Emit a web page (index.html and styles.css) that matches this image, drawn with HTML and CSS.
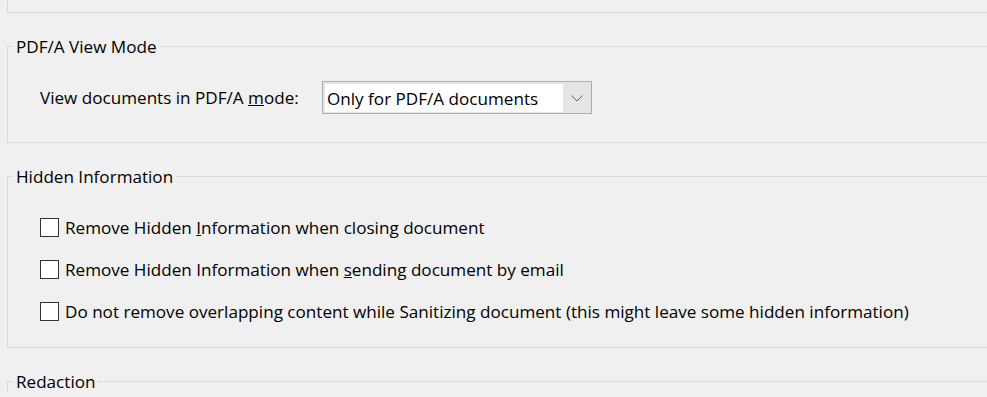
FILE: index.html
```html
<!DOCTYPE html>
<html lang="en">
<head>
    <meta charset="UTF-8" />
    <meta name="viewport" content="width=device-width, initial-scale=1.0" />
    <title>Preferences - Documents</title>
    <link rel="stylesheet" href="styles.css">
</head>
<body>
    <div class="panel">
        <!-- previous group, scrolled off the top -->
        <div class="group-tail"></div>

        <fieldset class="group">
            <legend>PDF/A View Mode</legend>
            <div class="group-body pdfa">
                <div class="field-row">
                    <label class="field-label">View documents in PDF/A <u>m</u>ode:</label>
                    <div class="combo">
                        <span class="combo-value">Only for PDF/A documents</span>
                        <span class="combo-arrow">
                            <svg width="12" height="7" viewBox="0 0 12 7">
                                <path d="M0.5 0.5 L6 6 L11.5 0.5" fill="none" stroke="#606060" stroke-width="1"/>
                            </svg>
                        </span>
                    </div>
                </div>
            </div>
        </fieldset>

        <fieldset class="group">
            <legend>Hidden Information</legend>
            <div class="group-body hidden-info">
                <label class="check-row">
                    <span class="checkbox"></span>
                    <span>Remove Hidden <u>I</u>nformation when closing document</span>
                </label>
                <label class="check-row">
                    <span class="checkbox"></span>
                    <span>Remove Hidden Information when <u>s</u>ending document by email</span>
                </label>
                <label class="check-row">
                    <span class="checkbox"></span>
                    <span>Do not remove overlapping content while Sanitizing document (this might leave some hidden information)</span>
                </label>
            </div>
        </fieldset>

        <!-- next group, cut off by the bottom -->
        <fieldset class="group group-open">
            <legend>Redaction</legend>
        </fieldset>
    </div>
</body>
</html>
```

FILE: styles.css
```css
:root {
    --bg-color: #f0f0f0;
    --line-color: #dadada;
    --text-color: #000000;
}

body {
    margin: 0;
    padding: 0;
    background-color: var(--bg-color);
    color: var(--text-color);
    font-family: 'Open Sans', 'Noto Sans', sans-serif;
    font-size: 17.1px;
}

.panel {
    padding-left: 7px;
}

.group-tail {
    height: 13px;
    box-sizing: border-box;
    border-left: 1px solid var(--line-color);
    border-bottom: 1px solid var(--line-color);
}

.group {
    margin: 23px 0 0 0;
    padding: 0;
    border: 1px solid var(--line-color);
    border-right: none;
    min-width: 0;
}

.group legend {
    margin-left: 5px;
    padding: 0 3px;
    line-height: 21px;
}

.group-open {
    border-bottom: none;
}

.group-body {
    padding-left: 32px;
}

.pdfa {
    padding-top: 24px;
    padding-bottom: 28px;
}

.field-row {
    display: flex;
    align-items: center;
}

.field-label {
    width: 282px;
    flex-shrink: 0;
}

.combo {
    display: flex;
    width: 270px;
    height: 33px;
    box-sizing: border-box;
    border: 1px solid #adadad;
    background-color: #e5e5e5;
    padding: 2px 0 1px 2px;
}

.combo-value {
    flex: 1;
    background-color: #ffffff;
    display: flex;
    align-items: center;
    padding-left: 2px;
}

.combo-arrow {
    width: 28px;
    display: flex;
    align-items: center;
    justify-content: center;
}

.hidden-info {
    padding-top: 19px;
    padding-bottom: 15px;
}

.check-row {
    display: flex;
    align-items: center;
    height: 42px;
}

.checkbox {
    width: 19px;
    height: 19px;
    box-sizing: border-box;
    border: 1px solid #333333;
    background-color: #ffffff;
    margin-right: 6px;
    flex-shrink: 0;
}
```
